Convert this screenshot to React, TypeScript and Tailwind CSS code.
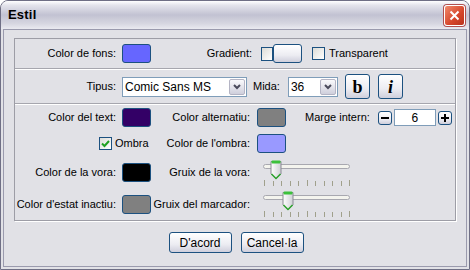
import React from 'react';

const swatch = 'w-[29px] h-[19px] rounded-[3px] border border-[#1c5180] shrink-0';

function Swatch({ color }: { color: string }) {
  return <div className={swatch} style={{ backgroundColor: color }} />;
}

function Check({ checked }: { checked?: boolean }) {
  return (
    <div className="w-[13px] h-[13px] border border-[#1c5180] bg-[linear-gradient(135deg,#dcdcd7,#ffffff)] flex items-center justify-center shrink-0">
      {checked && (
        <svg width="9" height="9" viewBox="0 0 9 9">
          <path d="M1 4.5 L3.5 7 L8 2" stroke="#21a121" strokeWidth="2" fill="none" />
        </svg>
      )}
    </div>
  );
}

function Combo({ value, width }: { value: string; width: string }) {
  return (
    <div className={`${width} h-[20px] bg-white border border-[#7f9db9] flex items-stretch`}>
      <span className="flex-1 pl-[2px] leading-[18px] text-[12px]">{value}</span>
      <div className="w-[16px] m-px rounded-[2px] border border-[#b4b4c4] bg-[linear-gradient(to_bottom,#fafafc,#cfcfdc)] flex items-center justify-center">
        <svg width="8" height="6" viewBox="0 0 8 6">
          <path d="M1 1 L4 4 L7 1" stroke="#4b4b5c" strokeWidth="2" fill="none" />
        </svg>
      </div>
    </div>
  );
}

function SmallBtn({ children, className = '' }: { children: React.ReactNode; className?: string }) {
  return (
    <div
      className={`rounded-[3px] border border-[#1c5180] bg-[linear-gradient(to_bottom,#ffffff,#ececf2_60%,#cfcfdc)] flex items-center justify-center ${className}`}
    >
      {children}
    </div>
  );
}

function Slider({ pos }: { pos: number }) {
  const ticks = Array.from({ length: 11 }, (_, i) => 5 + i * 8.5);
  return (
    <svg width="100" height="27" viewBox="0 0 100 27" className="shrink-0">
      <rect x="4.5" y="4.5" width="86" height="4" rx="2" fill="#f4f4ee" stroke="#a8a8b0" />
      {ticks.map((t, i) => (
        <line
          key={i}
          x1={Math.round(t) + 0.5}
          x2={Math.round(t) + 0.5}
          y1={i === 0 || i === 5 || i === 10 ? 20 : 21}
          y2="26"
          stroke="#a0a08c"
        />
      ))}
      <defs>
        <linearGradient id={`th${pos}`} x1="0" x2="1" y1="0" y2="0">
          <stop offset="0" stopColor="#ffffff" />
          <stop offset="1" stopColor="#cfcfd6" />
        </linearGradient>
      </defs>
      <path
        d={`M${pos - 5} 1.5 L${pos + 5} 1.5 L${pos + 5} 14 L${pos} 19 L${pos - 5} 14 Z`}
        fill={`url(#th${pos})`}
        stroke="#8a8a94"
      />
      <rect x={pos - 4.5} y="0.5" width="9" height="3" rx="1" fill="#3cc13c" />
      <path d={`M${pos - 4.5} 14 L${pos} 18.5 L${pos + 4.5} 14`} stroke="#2ea52e" strokeWidth="1.5" fill="none" />
    </svg>
  );
}

export default function App() {
  return (
    <div
      className="w-[470px] h-[270px] flex flex-col bg-[#e1e1e6] border border-[#6f6f85] rounded-t-[8px] overflow-hidden text-[11px] text-black"
      style={{ fontFamily: '"Liberation Sans", Arial, sans-serif' }}
    >
      {/* title bar */}
      <div className="h-[28px] shrink-0 flex items-center justify-between pl-[7px] pr-[4px] bg-[linear-gradient(to_bottom,#ffffff_0%,#e4e4ec_15%,#c2c2d2_50%,#d6d6e0_80%,#eaeaf0_100%)]">
        <span className="font-bold text-[13px] tracking-[0.2px]">Estil</span>
        <div className="w-[21px] h-[21px] rounded-[3px] border border-white bg-[linear-gradient(135deg,#f08a6c,#d5452a_60%,#b8321c)] flex items-center justify-center shadow-[0_0_0_1px_#b05050]">
          <svg width="11" height="11" viewBox="0 0 11 11">
            <path d="M1.5 1.5 L9.5 9.5 M9.5 1.5 L1.5 9.5" stroke="#fff" strokeWidth="2" />
          </svg>
        </div>
      </div>

      {/* body */}
      <div className="flex-1 px-[2px] pb-[2px]">
        <div className="h-full border border-[#9a9aad] flex flex-col">
          {/* group panel */}
          <div className="ml-[10px] mt-[8px] w-[442px] h-[183px] border border-[#9d9da6] shadow-[1px_1px_0_#fff] flex flex-col">
            {/* row 1 */}
            <div className="h-[29px] flex items-center">
              <span className="w-[101px] text-right">Color de fons:</span>
              <div className="ml-[6px]"><Swatch color="#6666ff" /></div>
              <span className="w-[101px] text-right">Gradient:</span>
              <div className="ml-[9px] flex items-center">
                <div className="w-[12px] h-[14px] border border-[#1c5180] bg-[linear-gradient(135deg,#dcdcd7,#ffffff)]" />
                <SmallBtn className="w-[29px] h-[19px]"><span /></SmallBtn>
              </div>
              <div className="ml-[10px]"><Check /></div>
              <span className="ml-[4px]">Transparent</span>
            </div>
            <div className="h-px bg-[#a6a6ae]" />
            <div className="h-px bg-white" />
            {/* row 2 */}
            <div className="h-[33px] flex items-center">
              <span className="w-[101px] text-right">Tipus:</span>
              <div className="ml-[6px]"><Combo value="Comic Sans MS" width="w-[125px]" /></div>
              <span className="ml-[6px]">Mida:</span>
              <div className="ml-[8px]"><Combo value="36" width="w-[50px]" /></div>
              <SmallBtn className="ml-[7px] w-[25px] h-[25px]">
                <span className="font-bold text-[18px] leading-none" style={{ fontFamily: '"Liberation Serif", serif' }}>b</span>
              </SmallBtn>
              <SmallBtn className="ml-[8px] w-[25px] h-[25px]">
                <span className="font-bold italic text-[18px] leading-none" style={{ fontFamily: '"Liberation Serif", serif' }}>i</span>
              </SmallBtn>
            </div>
            <div className="h-px bg-[#a6a6ae]" />
            <div className="h-px bg-white" />
            {/* row 3 */}
            <div className="h-[25px] flex items-center">
              <span className="w-[101px] text-right">Color del text:</span>
              <div className="ml-[6px]"><Swatch color="#330066" /></div>
              <span className="w-[99px] text-right">Color alternatiu:</span>
              <div className="ml-[7px]"><Swatch color="#808080" /></div>
              <span className="ml-[19px]">Marge intern:</span>
              <SmallBtn className="ml-[8px] w-[14px] h-[14px]">
                <svg width="8" height="8" viewBox="0 0 8 8"><rect x="0" y="3" width="8" height="2" fill="#000" /></svg>
              </SmallBtn>
              <div className="ml-[2px] w-[42px] h-[17px] bg-white border border-[#7f9db9] flex items-center justify-center text-[12px]">6</div>
              <SmallBtn className="ml-[2px] w-[14px] h-[14px]">
                <svg width="8" height="8" viewBox="0 0 8 8"><rect x="0" y="3" width="8" height="2" fill="#000" /><rect x="3" y="0" width="2" height="8" fill="#000" /></svg>
              </SmallBtn>
            </div>
            {/* row 4 */}
            <div className="h-[26px] flex items-center">
              <div className="w-[136px] flex items-center pl-[84px]">
                <Check checked />
                <span className="ml-[3px] text-[11px]">Ombra</span>
              </div>
              <span className="w-[99px] text-right">Color de l'ombra:</span>
              <div className="ml-[7px]"><Swatch color="#9999ff" /></div>
            </div>
            {/* row 5 */}
            <div className="h-[32px] flex items-center">
              <span className="w-[101px] text-right">Color de la vora:</span>
              <div className="ml-[6px]"><Swatch color="#000000" /></div>
              <span className="w-[99px] text-right">Gruix de la vora:</span>
              <div className="ml-[9px] mt-[2px]"><Slider pos={17} /></div>
            </div>
            {/* row 6 */}
            <div className="h-[32px] flex items-center">
              <span className="w-[101px] text-right">Color d'estat inactiu:</span>
              <div className="ml-[6px]"><Swatch color="#808080" /></div>
              <span className="w-[99px] text-right">Gruix del marcador:</span>
              <div className="ml-[9px]"><Slider pos={29} /></div>
            </div>
          </div>

          {/* buttons */}
          <div className="mt-[11px] flex justify-center gap-[9px] pl-[2px]">
            <SmallBtn className="w-[63px] h-[21px]"><span className="text-[12px]">D'acord</span></SmallBtn>
            <SmallBtn className="w-[63px] h-[21px]"><span className="text-[12px]">Cancel·la</span></SmallBtn>
          </div>
        </div>
      </div>
    </div>
  );
}
